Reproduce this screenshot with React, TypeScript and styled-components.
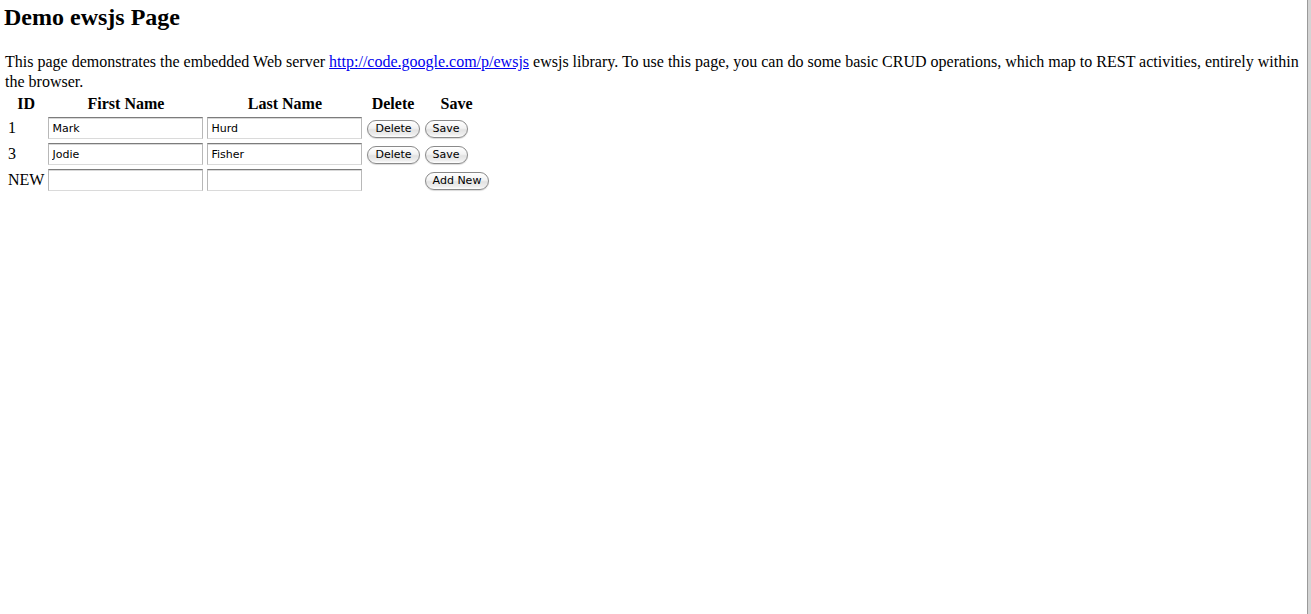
import React from "react";
import styled, { createGlobalStyle } from "styled-components";

const GlobalStyle = createGlobalStyle`
  html, body {
    margin: 0;
    padding: 0;
    background: #ffffff;
  }
  body {
    font-family: "Liberation Serif", "Times New Roman", serif;
    font-size: 16px;
    color: #000000;
  }
`;

const Page = styled.div`
  padding: 4px 6px 0 5px;
`;

const Title = styled.h2`
  margin: 0 0 21px -1px;
  font-size: 24px;
  font-weight: bold;
  line-height: normal;
`;

const Intro = styled.p`
  margin: 0;
  line-height: 20px;
`;

const Link = styled.a`
  color: #0000ee;
  text-decoration: underline;
`;

const Table = styled.table`
  border-collapse: separate;
  border-spacing: 2px;
  margin-left: 0;
`;

const HeadCell = styled.th`
  padding: 1px;
  font-weight: bold;
  text-align: center;
  vertical-align: middle;
  line-height: 18px;
`;

const Cell = styled.td`
  padding: 1px;
  vertical-align: middle;
  text-align: left;
`;

const TextInput = styled.input`
  box-sizing: border-box;
  width: 155px;
  height: 22px;
  margin: 0;
  padding: 1px 3px 0;
  border: 1px solid;
  border-color: #7c7c7c #b8b8b8 #dadada #b8b8b8;
  box-shadow: inset 0 1px 0 #d8d8d8;
  background: #ffffff;
  font-family: "DejaVu Sans", "Lucida Grande", sans-serif;
  font-size: 11px;
  color: #000000;
  outline: none;
`;

const Button = styled.button`
  box-sizing: border-box;
  height: 18px;
  margin: 0 0 0 1px;
  padding: 0 7px;
  border: 1px solid #8a8a8a;
  border-radius: 9px;
  background: linear-gradient(
    to bottom,
    #ffffff 0%,
    #f2f2f2 45%,
    #e2e2e2 55%,
    #eeeeee 85%,
    #ffffff 100%
  );
  box-shadow: 0 1px 1px rgba(0, 0, 0, 0.15);
  font-family: "DejaVu Sans", "Lucida Grande", sans-serif;
  font-size: 11px;
  line-height: 16px;
  color: #000000;
  white-space: nowrap;
  cursor: pointer;
`;

const WindowEdge = styled.div`
  position: fixed;
  top: 0;
  right: 0;
  bottom: 0;
  width: 3px;
  border-left: 1px solid #9a9a9a;
  background: #d4d4d4;
`;

type Person = { id: number; first: string; last: string };

const people: Person[] = [
  { id: 1, first: "Mark", last: "Hurd" },
  { id: 3, first: "Jodie", last: "Fisher" },
];

export default function App() {
  return (
    <>
      <GlobalStyle />
      <Page>
        <Title>Demo ewsjs Page</Title>
        <Intro>
          This page demonstrates the embedded Web server{" "}
          <Link href="#">http://code.google.com/p/ewsjs</Link> ewsjs library. To
          use this page, you can do some basic CRUD operations, which map to REST
          activities, entirely within the browser.
        </Intro>
        <Table>
          <thead>
            <tr>
              <HeadCell>ID</HeadCell>
              <HeadCell>First Name</HeadCell>
              <HeadCell>Last Name</HeadCell>
              <HeadCell>Delete</HeadCell>
              <HeadCell>Save</HeadCell>
            </tr>
          </thead>
          <tbody>
            {people.map((p) => (
              <tr key={p.id}>
                <Cell>{p.id}</Cell>
                <Cell>
                  <TextInput type="text" defaultValue={p.first} />
                </Cell>
                <Cell>
                  <TextInput type="text" defaultValue={p.last} />
                </Cell>
                <Cell>
                  <Button type="button">Delete</Button>
                </Cell>
                <Cell>
                  <Button type="button">Save</Button>
                </Cell>
              </tr>
            ))}
            <tr>
              <Cell>NEW</Cell>
              <Cell>
                <TextInput type="text" defaultValue="" />
              </Cell>
              <Cell>
                <TextInput type="text" defaultValue="" />
              </Cell>
              <Cell />
              <Cell>
                <Button type="button">Add New</Button>
              </Cell>
            </tr>
          </tbody>
        </Table>
      </Page>
      <WindowEdge />
    </>
  );
}
